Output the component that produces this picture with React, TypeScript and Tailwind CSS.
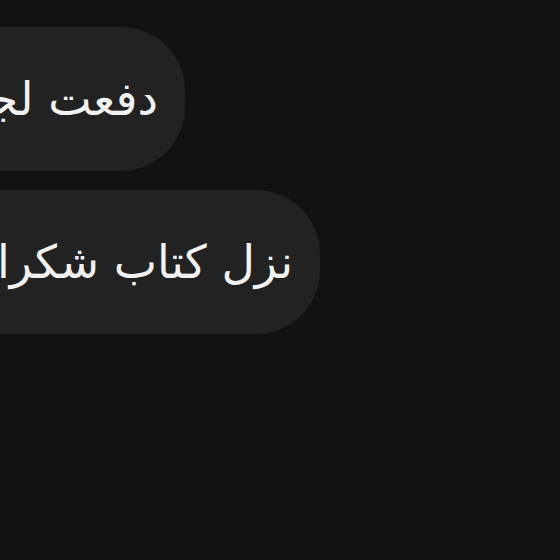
const messages = [
  { id: 1, text: 'دفعت لجدتي', width: 'w-[400px]' },
  { id: 2, text: 'نزل كتاب شكرا', width: 'w-[535px]' },
];

export default function App() {
  return (
    <div className="w-[560px] h-[560px] bg-[#121212] overflow-hidden" style={{ fontFamily: '"DejaVu Sans", sans-serif' }}>
      <div className="flex flex-col items-start gap-[19px] pt-[27px]">
        {messages.map((m) => (
          <div
            key={m.id}
            dir="rtl"
            className={`${m.width} -ml-[215px] h-[144px] rounded-[64px] bg-[#222222] flex items-center pr-[27px] overflow-hidden`}
          >
            <span className="whitespace-nowrap text-[46px] text-[#f2f2f2] leading-none">{m.text}</span>
          </div>
        ))}
      </div>
    </div>
  );
}
